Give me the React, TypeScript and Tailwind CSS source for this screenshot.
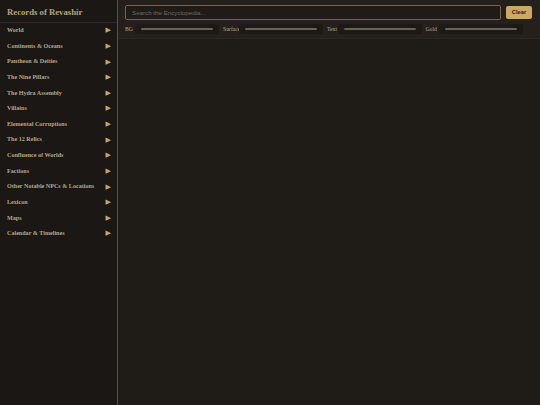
const items = ["World","Continents & Oceans","Pantheon & Deities","The Nine Pillars","The Hydra Assembly","Villains","Elemental Corruptions","The 12 Relics","Confluence of Worlds","Factions","Other Notable NPCs & Locations","Lexicon","Maps","Calendar & Timelines"];
const sliders = [["BG","w-[9px]"],["Surface","w-[15px]"],["Text","w-[9.5px]"],["Gold","w-[12px]"]];

export default function App() {
  return (
    <div className="flex h-[405px] w-[540px] overflow-hidden bg-[#1f1b17] font-['Liberation_Serif',serif]">
      <aside className="flex w-[118px] shrink-0 flex-col border-r border-[#5a5044] bg-[#1a1714]">
        <div className="flex h-[22.5px] items-center border-b border-[#2c2a22] px-[7px] pt-[3px] text-[8.7px] font-bold text-[#b8a17e]">Records of Revashir</div>
        <nav className="flex flex-col pt-[0.3px]">
          {items.map((t) => (
            <div key={t} className="flex h-[15.64px] items-center justify-between pl-[7px] pr-[6px] text-[6.1px] font-bold text-[#b5a68c]">
              <span>{t}</span>
              <span className="font-['DejaVu_Sans',sans-serif] text-[7px] text-[#bfa67e]">▶</span>
            </div>
          ))}
        </nav>
      </aside>
      <main className="flex min-w-0 flex-1 flex-col">
        <div className="flex h-[39px] flex-col border-b border-[#2a2620] bg-[#25201b] pl-[7px] pr-[8px]">
          <div className="mt-[5px] flex items-center gap-[5px]">
            <div className="flex h-[15px] flex-1 items-center rounded-[2px] border border-[#75634a] bg-[#1f1b17] px-[6px] font-['Liberation_Sans',sans-serif] text-[6.2px] text-[#6f6a63]">Search the Encyclopedia...</div>
            <button className="h-[13px] w-[26px] rounded-[2px] bg-[#cda766] font-['Liberation_Sans',sans-serif] text-[5.8px] font-bold text-[#2a241c]">Clear</button>
          </div>
          <div className="mt-[4px] flex items-center text-[5.7px] text-[#b0a692]">
            {sliders.map(([s, w]) => (
              <div key={s} className="mr-[4px] flex items-center gap-[1px]">
                <span className={`${w} whitespace-nowrap`}>{s}</span>
                <div className="flex h-[10px] w-[84px] items-center rounded-[2px] bg-[#1d1a16] px-[6px]">
                  <div className="h-[2px] w-full rounded-full bg-[#66625c]" />
                </div>
              </div>
            ))}
          </div>
        </div>
        <div className="flex-1 bg-[#1f1b17]" />
      </main>
    </div>
  );
}
